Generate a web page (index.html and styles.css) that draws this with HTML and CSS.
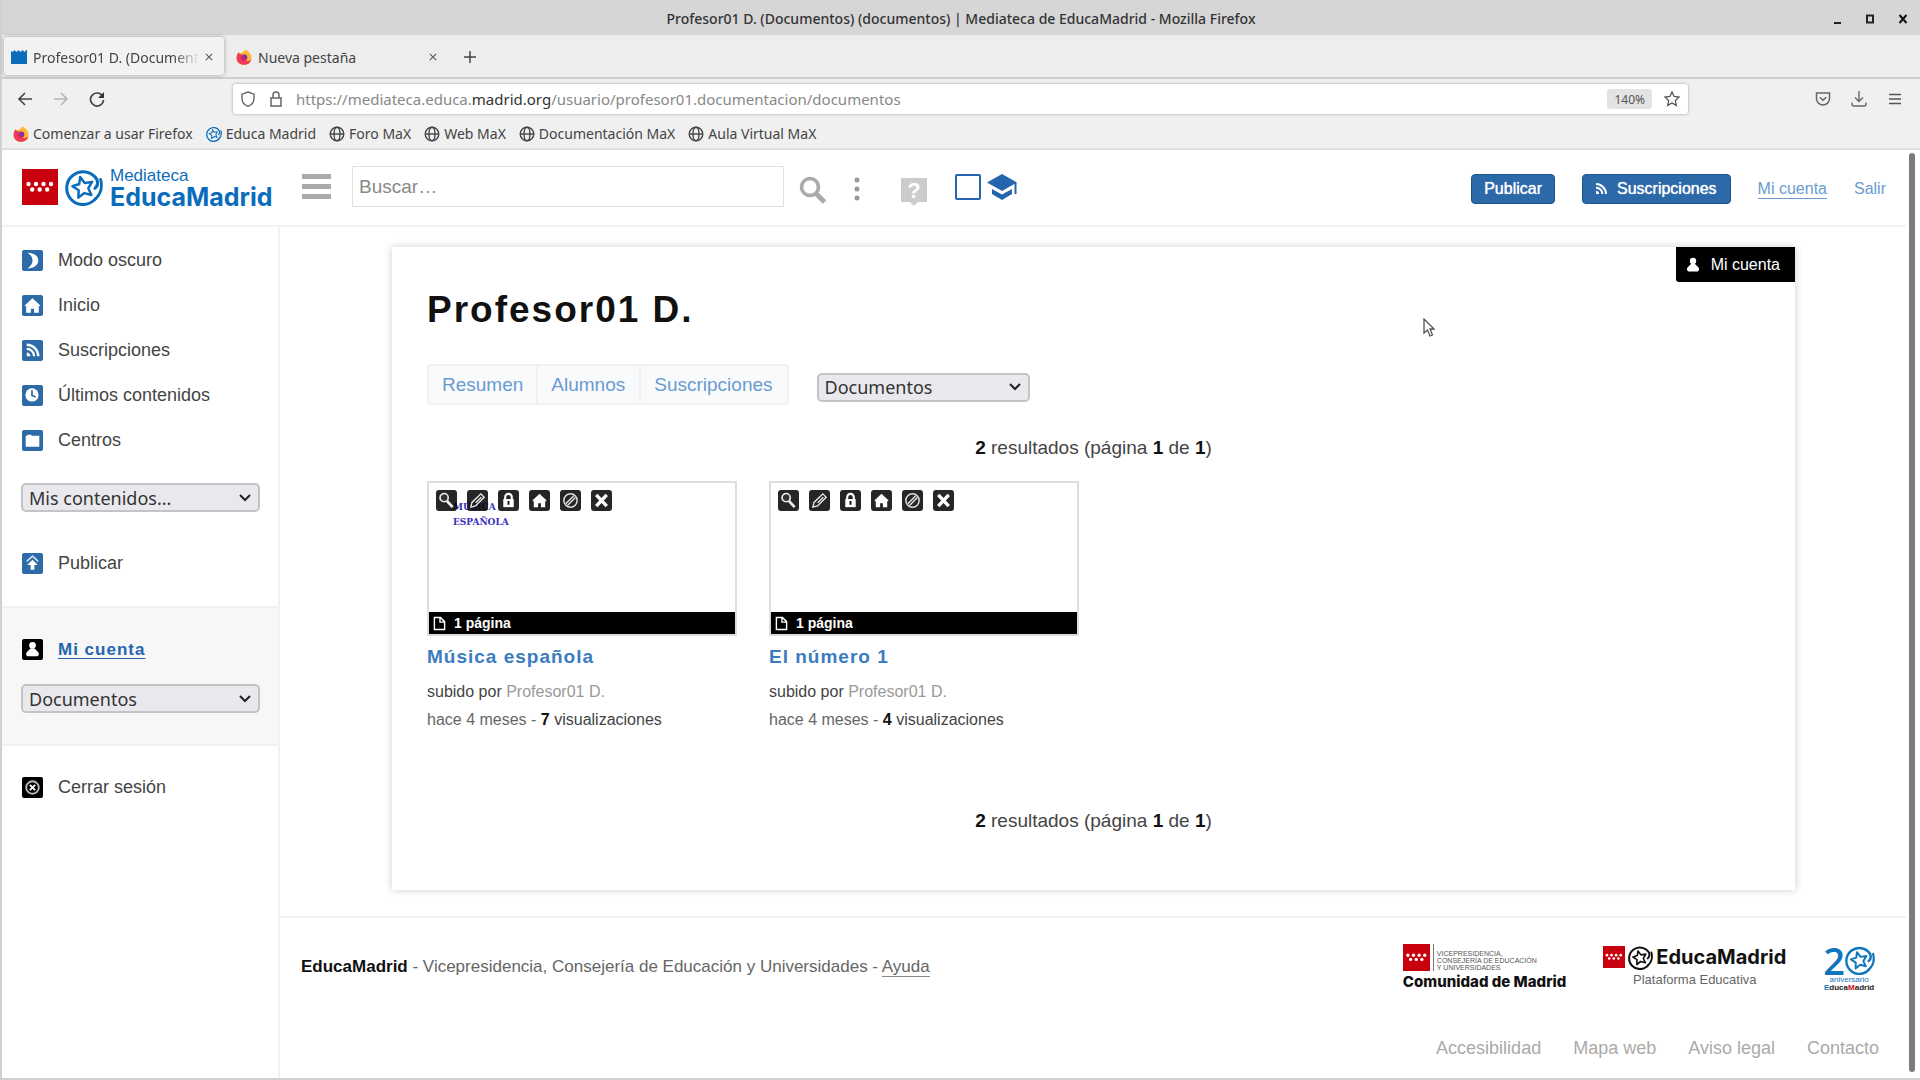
FILE: index.html
```
<!DOCTYPE html>
<html lang="es">
<head>
    <meta charset="UTF-8">
    <meta name="viewport" content="width=device-width, initial-scale=1.0">
    <title>Profesor01 D. (Documentos) (documentos) | Mediateca de EducaMadrid</title>
    <link rel="stylesheet" href="styles.css">
</head>
<body>
    <!-- shared icons -->
    <svg class="sprite" aria-hidden="true">
        <symbol id="globe" viewBox="0 0 16 16">
            <g fill="none" stroke="#444" stroke-width="1.4"><circle cx="8" cy="8" r="6.8"/><ellipse cx="8" cy="8" rx="3" ry="6.8"/><path d="M1.2 8h13.6"/></g>
        </symbol>
        <symbol id="firefox" viewBox="0 0 16 16">
            <path fill="#ffb52e" d="M9 .5c3 1.5 6.5 4 6.5 8.500 0 4-3.500 6.800-7.500 6.800S.6 12.800.6 9c0-2.500 1-4.500 2.400-6l1 1.500C5.500 3.500 7 4 9 .5z"/>
            <path fill="#ef3b58" d="M2.500 3.500C.8 5.500.6 7.500.6 9c0 4 3.300 6.800 7.400 6.800 3.600 0 6.600-2 7.300-5.300C13 12.500 10 12.500 7.500 11 5 9.500 5 7 7 5.500 5 5.500 3.500 5 2.500 3.500z"/>
            <circle cx="8.3" cy="8.6" r="3" fill="#7a2fb5"/>
            <path fill="#d9265c" d="M4.500 7.500c2 .3 3-.7 4.500-.5-1 1-2 1-2 2 .6 1.700 2.500 1.500 4 .8-.8 2-2.500 2.700-4 2.200-1.700-.6-2.700-2.500-2.500-4.500z"/>
        </symbol>
        <symbol id="star" viewBox="0 0 40 40">
            <g fill="none" stroke="currentColor" stroke-linecap="round" stroke-linejoin="round">
                <path d="M32 32.500A17.200 17.200 0 1 1 33.500 12c1.500 4 .5 7.500-2 9.500" stroke-width="3.2"/>
                <path d="M37.500 12C39.500 20 37.500 27.500 32 32.500" stroke-width="3"/>
                <path d="M16 9.500l4.700 6.300 7.800-1.200-4 6.800 3.300 7-7.500-2-6.200 4.800.3-7.700-6.600-4.300 7.200-2.400z" stroke-width="2.6"/>
            </g>
        </symbol>
        <symbol id="flag" viewBox="0 0 36 36">
            <path fill="#c9000e" d="M0 0h36v36H0z"/>
            <g fill="#fff"><circle cx="6.5" cy="15" r="2.2"/><circle cx="14" cy="15" r="2.2"/><circle cx="21.500" cy="15" r="2.2"/><circle cx="29" cy="15" r="2.2"/><circle cx="10.200" cy="20.500" r="2.2"/><circle cx="17.700" cy="20.500" r="2.2"/><circle cx="25.200" cy="20.500" r="2.2"/></g>
        </symbol>
        <symbol id="rss" viewBox="0 0 20 20">
            <g fill="none" stroke="#fff" stroke-width="2.2"><path d="M4.500 4.500c6 0 11 5 11 11M4.500 8.500c4 0 7 3 7 7"/></g><path fill="#fff" d="M4.500 12c2 0 3.500 1.500 3.500 3.500H4.500z"/>
        </symbol>
        <symbol id="house" viewBox="0 0 20 20"><path fill="#fff" d="M10 3l7.500 7-1.500 1v6h-4.500v-4h-3v4H4v-6l-1.500-1z"/></symbol>
        <symbol id="person" viewBox="0 0 20 20"><circle cx="10" cy="6" r="3.2" fill="#fff"/><path fill="#fff" d="M8 9h4l3.500 3.500c1 1.500.5 4-1.500 4H6c-2 0-2.500-2.500-1.500-4z"/></symbol>
        <symbol id="lens" viewBox="0 0 20 20"><circle cx="7.5" cy="7" r="4.3" fill="#333" stroke="#eee" stroke-width="1.7"/><path d="M10.500 10.500l6 6.500" stroke="#eee" stroke-width="2.8"/></symbol>
        <symbol id="pencil" viewBox="0 0 20 20"><path fill="none" stroke="#eee" stroke-width="1.4" d="M3 17l1.200-5L13.500 3l3.500 3.500L8 15.800zM8 12.500l6-6"/></symbol>
        <symbol id="lock" viewBox="0 0 20 20"><path fill="none" stroke="#fff" stroke-width="2.2" d="M6.500 9V6.500a3.500 3.500 0 0 1 7 0V9"/><path fill="#fff" d="M4.500 8.500h11V17h-11z"/><path stroke="#111" stroke-width="2" d="M10 10.500v4"/></symbol>
        <symbol id="ban" viewBox="0 0 20 20"><g fill="none" stroke="#ddd" stroke-width="1.6"><circle cx="10" cy="10" r="7"/><path d="M5 13.500L13.500 5M6.800 15.200L15.200 6.800"/></g></symbol>
        <symbol id="cross" viewBox="0 0 20 20"><path stroke="#fff" stroke-width="3.6" d="M4.500 4l11 12M15.500 4l-11 12"/></symbol>
        <symbol id="page" viewBox="0 0 14 16"><path fill="none" stroke="#fff" stroke-width="1.5" d="M1.500 1.500h6.500l4.500 4.500v8.500h-11zM7.500 1.500v5h5"/></symbol>
    </svg>

    <div class="window">
        <div class="titlebar">
            <span class="window-title">Profesor01 D. (Documentos) (documentos) | Mediateca de EducaMadrid - Mozilla Firefox</span>
            <div class="window-buttons">
                <button aria-label="Minimizar"><svg viewBox="0 0 10 10"><path d="M2 9h7" stroke="#222" stroke-width="2"/></svg></button>
                <button aria-label="Maximizar"><svg viewBox="0 0 10 10"><path d="M2 1.500h6v7H2z" fill="none" stroke="#222" stroke-width="2"/></svg></button>
                <button aria-label="Cerrar"><svg viewBox="0 0 10 10"><path d="M1.500 1l7 8M8.500 1l-7 8" stroke="#111" stroke-width="2"/></svg></button>
            </div>
        </div>

        <div class="tabstrip">
            <div class="tab tab-active">
                <svg class="favicon" viewBox="0 0 16 16"><path fill="#0b6cbc" d="M0 2l2 1 1-2 3 2 1-2 3 2 1-2 3 2 1-2h1v14H0z"/></svg>
                <span class="tab-label tab-fade">Profesor01 D. (Documentos)</span>
                <button class="tab-close" aria-label="Cerrar pestaña"><svg viewBox="0 0 10 10"><path d="M1 1l8 8M9 1l-8 8" stroke="#555" stroke-width="1.3"/></svg></button>
            </div>
            <div class="tab">
                <svg class="favicon"><use href="#firefox"/></svg>
                <span class="tab-label">Nueva pestaña</span>
                <button class="tab-close" aria-label="Cerrar pestaña"><svg viewBox="0 0 10 10"><path d="M1 1l8 8M9 1l-8 8" stroke="#555" stroke-width="1.3"/></svg></button>
            </div>
            <button class="new-tab" aria-label="Nueva pestaña"><svg viewBox="0 0 12 12"><path d="M6 0v12M0 6h12" stroke="#444" stroke-width="1.5"/></svg></button>
        </div>

        <div class="toolbar">
            <div class="nav-buttons">
                <button aria-label="Atrás"><svg viewBox="0 0 16 16"><path d="M15 8H2M8 2L2 8l6 6" fill="none" stroke="#444" stroke-width="1.6"/></svg></button>
                <button aria-label="Adelante" disabled><svg viewBox="0 0 16 16"><path d="M1 8h13M8 2l6 6-6 6" fill="none" stroke="#b5b5b5" stroke-width="1.6"/></svg></button>
                <button aria-label="Recargar"><svg viewBox="0 0 16 16"><path d="M13.500 5A6.500 6.500 0 1 0 14.500 9" fill="none" stroke="#444" stroke-width="1.7"/><path d="M15 1v6H9z" fill="#333"/></svg></button>
            </div>
            <div class="urlbar">
                <svg viewBox="0 0 16 16"><path d="M8 1l6 2.200v4.300C14 11 11.500 14 8 15.300 4.500 14 2 11 2 7.500V3.200z" fill="none" stroke="#666" stroke-width="1.4"/></svg>
                <svg viewBox="0 0 16 16"><path d="M3 7h10v8H3zM5 7V4a3 3 0 0 1 6 0v3" fill="none" stroke="#666" stroke-width="1.5"/></svg>
                <span class="url">https://mediateca.educa.<b>madrid.org</b>/usuario/profesor01.documentacion/documentos</span>
                <button class="zoom-level">140%</button>
                <button class="bookmark-star" aria-label="Añadir a marcadores"><svg viewBox="0 0 16 16"><path d="M8 1l2.100 4.500 4.900.6-3.600 3.400.9 4.900L8 12l-4.300 2.400.9-4.900L1 6.100l4.900-.6z" fill="none" stroke="#555" stroke-width="1.3"/></svg></button>
            </div>
            <div class="toolbar-end">
                <button aria-label="Pocket"><svg viewBox="0 0 16 16"><path d="M1.500 2h13v5.500a6.500 6.500 0 0 1-13 0zM4.800 6.200L8 9.300l3.200-3.100" fill="none" stroke="#666" stroke-width="1.5"/></svg></button>
                <button aria-label="Descargas"><svg viewBox="0 0 16 16"><path d="M8 0v10M4 6.500l4 4 4-4M1 11.500v1.500a2 2 0 0 0 2 2h10a2 2 0 0 0 2-2v-1.500" fill="none" stroke="#666" stroke-width="1.4"/></svg></button>
                <button aria-label="Menú"><svg viewBox="0 0 16 16"><path d="M2 3.500h12M2 8h12M2 12.500h12" stroke="#555" stroke-width="1.4"/></svg></button>
            </div>
        </div>

        <div class="bookmarks">
            <a href="#"><svg><use href="#firefox"/></svg>Comenzar a usar Firefox</a>
            <a href="#"><svg class="blue"><use href="#star"/></svg>Educa Madrid</a>
            <a href="#"><svg><use href="#globe"/></svg>Foro MaX</a>
            <a href="#"><svg><use href="#globe"/></svg>Web MaX</a>
            <a href="#"><svg><use href="#globe"/></svg>Documentación MaX</a>
            <a href="#"><svg><use href="#globe"/></svg>Aula Virtual MaX</a>
        </div>

        <div class="viewport">
            <div class="site">
                <header class="site-header">
                    <a class="logo" href="#">
                        <svg class="logo-flag"><use href="#flag"/></svg>
                        <svg class="logo-star"><use href="#star"/></svg>
                        <span class="logo-text"><span>Mediateca</span><strong>EducaMadrid</strong></span>
                    </a>
                    <button class="menu-toggle" aria-label="Menú"><span></span><span></span><span></span></button>
                    <form class="search">
                        <input type="text" placeholder="Buscar…" aria-label="Buscar">
                        <button type="button" class="search-go" aria-label="Buscar"><svg viewBox="0 0 28 28"><circle cx="11" cy="11" r="8.5" fill="none" stroke="#aaa" stroke-width="3.6"/><path d="M16.500 17l9 9" stroke="#aaa" stroke-width="5"/></svg></button>
                        <button type="button" class="search-more" aria-label="Opciones"><svg viewBox="0 0 6 24"><g fill="#999"><circle cx="3" cy="3" r="2.5"/><circle cx="3" cy="12" r="2.5"/><circle cx="3" cy="21" r="2.5"/></g></svg></button>
                        <button type="button" class="search-help" aria-label="Ayuda"><svg viewBox="0 0 26 28"><path d="M0 0h26v24h-9l-4 4-4-4H0z" fill="#ccc"/><text x="13" y="20" text-anchor="middle">?</text></svg></button>
                    </form>
                    <label class="edu-filter">
                        <input type="checkbox" aria-label="Solo contenido educativo">
                        <svg viewBox="0 0 30 26"><path d="M15 0l15 8.500L15 17 0 8.500z" fill="#2565ae"/><path d="M5 15l10 5.500L25 15v5L15 26 5 20z" fill="#2565ae"/><path d="M28.500 9v11" stroke="#2565ae" stroke-width="2"/></svg>
                    </label>
                    <nav class="user-nav">
                        <button class="btn">Publicar</button>
                        <button class="btn btn-rss"><svg><use href="#rss"/></svg>Suscripciones</button>
                        <a class="current" href="#">Mi cuenta</a>
                        <a href="#">Salir</a>
                    </nav>
                </header>

                <div class="site-body">
                    <aside class="sidebar">
                        <ul class="side-list">
                            <li><a href="#"><svg class="side-icon" viewBox="0 0 20 20"><path fill="#fff" d="M5 2.500c7 0 10.500 3.500 10.500 7.500s-3.500 7.500-10.500 7.500c3.500-2 5-4.500 5-7.500S8.500 4.500 5 2.500z"/></svg>Modo oscuro</a></li>
                            <li><a href="#"><svg class="side-icon"><use href="#house"/></svg>Inicio</a></li>
                            <li><a href="#"><svg class="side-icon"><use href="#rss"/></svg>Suscripciones</a></li>
                            <li><a href="#"><svg class="side-icon" viewBox="0 0 20 20"><circle cx="9.5" cy="9.5" r="6.3" fill="#fff"/><path d="M9.500 5V10l3.500 1.500" fill="none" stroke="#2c6ba8" stroke-width="1.6"/></svg>Últimos contenidos</a></li>
                            <li><a href="#"><svg class="side-icon" viewBox="0 0 20 20"><path fill="#fff" d="M3.500 5.500h1.500v-1h4v1h7.500v10.500h-13z"/></svg>Centros</a></li>
                        </ul>
                        <div class="side-select">
                            <select aria-label="Mis contenidos"><option>Mis contenidos...</option></select>
                        </div>
                        <ul class="side-list side-publish">
                            <li><a href="#"><svg class="side-icon" viewBox="0 0 20 20"><path fill="#fff" d="M10 6.500l5 5h-3.200V16H8.200v-4.500H5z"/><path d="M4.500 8L10 3l5.500 5" fill="none" stroke="#cfe0f2" stroke-width="1.5"/></svg>Publicar</a></li>
                        </ul>
                        <div class="side-account">
                            <a class="current" href="#"><svg class="side-icon dark"><use href="#person"/></svg><span>Mi cuenta</span></a>
                            <div class="side-select">
                                <select aria-label="Mi cuenta"><option>Documentos</option></select>
                            </div>
                        </div>
                        <ul class="side-list side-logout">
                            <li><a href="#"><svg class="side-icon dark" viewBox="0 0 20 20"><circle cx="10" cy="10" r="6" fill="none" stroke="#bbb" stroke-width="1.8"/><path d="M7.500 7.500l5 5M12.500 7.500l-5 5" stroke="#fff" stroke-width="1.8"/></svg>Cerrar sesión</a></li>
                        </ul>
                    </aside>

                    <div class="content">
                        <main class="panel">
                            <a class="account-tag" href="#"><svg><use href="#person"/></svg>Mi cuenta</a>
                            <h1>Profesor01 D.</h1>
                            <div class="filters">
                                <nav class="profile-tabs">
                                    <a href="#">Resumen</a>
                                    <a href="#">Alumnos</a>
                                    <a href="#">Suscripciones</a>
                                </nav>
                                <select aria-label="Tipo de contenido"><option>Documentos</option></select>
                            </div>
                            <p class="results"><b>2</b> resultados (página <b>1</b> de <b>1</b>)</p>
                            <div class="cards">
                                <article class="card">
                                    <div class="thumb">
                                        <div class="cover">MÚSICA<br>ESPAÑOLA</div>
                                        <div class="actions">
                                            <button aria-label="Ver"><svg><use href="#lens"/></svg></button>
                                            <button aria-label="Editar"><svg><use href="#pencil"/></svg></button>
                                            <button aria-label="Privado"><svg><use href="#lock"/></svg></button>
                                            <button aria-label="Portada"><svg><use href="#house"/></svg></button>
                                            <button aria-label="Bloquear"><svg><use href="#ban"/></svg></button>
                                            <button aria-label="Eliminar"><svg><use href="#cross"/></svg></button>
                                        </div>
                                        <div class="pages"><svg><use href="#page"/></svg>1 página</div>
                                    </div>
                                    <h2><a href="#">Música española</a></h2>
                                    <p class="author">subido por <a href="#">Profesor01 D.</a></p>
                                    <p class="meta">hace 4 meses - <span><b>7</b> visualizaciones</span></p>
                                </article>
                                <article class="card">
                                    <div class="thumb">
                                        <div class="actions">
                                            <button aria-label="Ver"><svg><use href="#lens"/></svg></button>
                                            <button aria-label="Editar"><svg><use href="#pencil"/></svg></button>
                                            <button aria-label="Privado"><svg><use href="#lock"/></svg></button>
                                            <button aria-label="Portada"><svg><use href="#house"/></svg></button>
                                            <button aria-label="Bloquear"><svg><use href="#ban"/></svg></button>
                                            <button aria-label="Eliminar"><svg><use href="#cross"/></svg></button>
                                        </div>
                                        <div class="pages"><svg><use href="#page"/></svg>1 página</div>
                                    </div>
                                    <h2><a href="#">El número 1</a></h2>
                                    <p class="author">subido por <a href="#">Profesor01 D.</a></p>
                                    <p class="meta">hace 4 meses - <span><b>4</b> visualizaciones</span></p>
                                </article>
                            </div>
                            <p class="results"><b>2</b> resultados (página <b>1</b> de <b>1</b>)</p>
                        </main>

                        <footer class="site-footer">
                            <div class="footer-top">
                                <p><strong>EducaMadrid</strong> - Vicepresidencia, Consejería de Educación y Universidades - <a href="#">Ayuda</a></p>
                                <div class="footer-logos">
                                    <div class="logo-cm">
                                        <div class="logo-cm-top">
                                            <svg><use href="#flag"/></svg>
                                            <span>VICEPRESIDENCIA,<br>CONSEJERÍA DE EDUCACIÓN<br>Y UNIVERSIDADES</span>
                                        </div>
                                        <strong>Comunidad de Madrid</strong>
                                    </div>
                                    <div class="logo-em">
                                        <div class="logo-em-top">
                                            <svg class="em-flag"><use href="#flag"/></svg>
                                            <svg class="em-star"><use href="#star"/></svg>
                                            <strong>EducaMadrid</strong>
                                        </div>
                                        <span>Plataforma Educativa</span>
                                    </div>
                                    <div class="logo-20">
                                        <div class="logo-20-top"><span>2</span><svg><use href="#star"/></svg></div>
                                        <span class="aniv">aniversario</span>
                                        <strong><i>E</i>duca<em>M</em>adrid</strong>
                                    </div>
                                </div>
                            </div>
                            <nav class="footer-links">
                                <a href="#">Accesibilidad</a>
                                <a href="#">Mapa web</a>
                                <a href="#">Aviso legal</a>
                                <a href="#">Contacto</a>
                            </nav>
                        </footer>
                    </div>
                </div>
            </div>
            <div class="scrollbar"></div>
        </div>
    </div>

    <svg class="pointer" viewBox="0 0 12 20"><path d="M1 1v14l3.500-3 2.500 6 2.500-1-2.500-6h4z" fill="#fff" stroke="#555" stroke-width="1.3"/></svg>
</body>
</html>
```
FILE: styles.css
```
* {
    box-sizing: border-box;
}
body {
    margin: 0;
    font-family: "Liberation Sans", Arial, sans-serif;
    font-size: 18px;
    color: #444;
    background: #fff;
}
button {
    padding: 0;
    border: none;
    background: none;
    font-family: inherit;
}
svg {
    display: block;
    flex: none;
}
h1, h2, p, ul {
    margin: 0;
    padding: 0;
}
a {
    color: inherit;
    text-decoration: none;
}
.sprite {
    position: absolute;
    width: 0;
    height: 0;
}

/* browser window */
.window {
    display: flex;
    flex-direction: column;
    min-height: 100vh;
    border-left: 2px solid #d0d0d0;
    border-bottom: 2px solid #d0d0d0;
}
.titlebar, .tabstrip, .toolbar, .bookmarks {
    font-family: "Noto Sans", sans-serif;
    font-size: 14px;
}
.titlebar {
    display: grid;
    grid-template-columns: 1fr auto 1fr;
    align-items: center;
    height: 35px;
    padding-top: 2px;
    background: #d6d6d6;
    color: #333;
}
.window-title {
    grid-column: 2;
    font-weight: 500;
}
.window-buttons {
    display: flex;
    justify-content: flex-end;
    gap: 23px;
    padding-right: 12px;
}
.window-buttons svg {
    width: 10px;
    height: 10px;
}
.tabstrip {
    display: flex;
    align-items: center;
    height: 44px;
    padding-left: 2px;
    background: #ededed;
    border-bottom: 2px solid #cfcfcf;
}
.tab {
    display: flex;
    align-items: center;
    width: 220px;
    height: 38px;
    padding: 2px 11px 0 7px;
    gap: 6px;
    color: #444;
}
.tab + .tab {
    width: 224px;
    padding-left: 12px;
}
.tab-active {
    background: #f2f2f2;
    border-radius: 3px;
    box-shadow: 0 0 4px rgba(0, 0, 0, 0.35);
}
.favicon {
    width: 16px;
    height: 16px;
}
.tab-label {
    flex: 1;
    overflow: hidden;
    white-space: nowrap;
}
.tab-fade {
    -webkit-mask-image: linear-gradient(to right, #000 85%, transparent);
    mask-image: linear-gradient(to right, #000 85%, transparent);
}
.tab-close svg {
    width: 8px;
    height: 8px;
}
.new-tab {
    margin-left: 16px;
    padding-top: 2px;
}
.new-tab svg {
    width: 12px;
    height: 12px;
}
.toolbar {
    display: flex;
    align-items: center;
    height: 40px;
    background: #f0f0f0;
}
.nav-buttons {
    display: flex;
    gap: 20px;
    width: 231px;
    padding-left: 15px;
}
.nav-buttons svg, .urlbar svg, .toolbar-end svg {
    width: 16px;
    height: 16px;
}
.urlbar {
    display: flex;
    flex: 1;
    align-items: center;
    gap: 12px;
    height: 30px;
    padding: 0 8px 0 7px;
    background: #fff;
    border-radius: 3px;
    box-shadow: 0 0 3px rgba(0, 0, 0, 0.35);
}
.url {
    flex: 1;
    color: #888;
    font-size: 15px;
}
.url b {
    font-weight: 400;
    color: #333;
}
.zoom-level {
    height: 20px;
    padding: 0 7px;
    background: #e3e3e3;
    border-radius: 3px;
    color: #555;
    font-size: 12px;
}
.toolbar-end {
    display: flex;
    justify-content: flex-end;
    gap: 20px;
    width: 232px;
    padding-right: 17px;
}
.bookmarks {
    display: flex;
    align-items: center;
    gap: 13px;
    height: 31px;
    padding: 0 11px;
    background: #f0f0f0;
    border-bottom: 2px solid #dedede;
    color: #444;
}
.bookmarks a {
    display: flex;
    align-items: center;
    gap: 4px;
}
.bookmarks svg {
    width: 16px;
    height: 16px;
}
.blue {
    color: #0b6cbc;
}
.viewport {
    display: flex;
    flex: 1;
}
.site {
    display: flex;
    flex: 1;
    flex-direction: column;
}
.scrollbar {
    width: 6px;
    margin: 3px 5px 6px 3px;
    border-radius: 3px;
    background: #7c7c7c;
}

/* site header */
.site-header {
    display: flex;
    align-items: center;
    height: 77px;
    padding: 0 20px 2px;
    border-bottom: 2px solid #f2f2f2;
}
.logo {
    display: flex;
    align-items: center;
    gap: 7px;
    width: 280px;
    color: #0b6cbc;
}
.logo-flag {
    width: 36px;
    height: 36px;
}
.logo-star {
    width: 38px;
    height: 38px;
}
.logo-text {
    display: flex;
    flex-direction: column;
    font-size: 17px;
    line-height: 20px;
}
.logo-text strong {
    font-family: Inter, sans-serif;
    font-size: 25px;
    line-height: 22px;
}
.menu-toggle {
    display: flex;
    flex-direction: column;
    gap: 5px;
    width: 29px;
    margin-right: 21px;
}
.menu-toggle span {
    height: 5px;
    background: #aaa;
}
.search {
    display: flex;
    align-items: center;
}
.search input {
    width: 432px;
    height: 41px;
    padding: 0 6px;
    border: 1px solid #e2e2e2;
    font: 19px "Liberation Sans", Arial, sans-serif;
}
.search input::placeholder {
    color: #888;
}
.search-go {
    margin: 6px 27px 0 15px;
}
.search-go svg {
    width: 28px;
    height: 28px;
}
.search-more {
    margin-top: 4px;
}
.search-more svg {
    width: 6px;
    height: 24px;
}
.search-help {
    margin: 10px 28px 0 41px;
}
.search-help svg {
    width: 26px;
    height: 28px;
}
.search-help text {
    fill: #fff;
    font-size: 22px;
    font-weight: 700;
}
.edu-filter {
    display: flex;
    align-items: center;
    gap: 6px;
}
.edu-filter input {
    appearance: none;
    width: 26px;
    height: 26px;
    margin: 0;
    border: 2px solid #2565ae;
    border-radius: 2px;
}
.edu-filter svg {
    width: 30px;
    height: 26px;
}
.user-nav {
    display: flex;
    align-items: center;
    gap: 27px;
    margin-left: auto;
    padding-top: 4px;
    font-size: 16px;
    line-height: 18px;
    color: #6a9bd0;
}
.btn {
    display: flex;
    align-items: center;
    height: 30px;
    padding: 0 12px;
    border: 1px solid #1d568f;
    border-radius: 4px;
    background: #2b69a9;
    color: #fff;
    font-size: 16px;
    text-shadow: 0 0 1px #fff;
}
.btn-rss {
    gap: 7px;
    padding: 0 13px 0 9px;
}
.btn-rss svg {
    width: 18px;
    height: 18px;
}
.user-nav .current {
    padding-top: 1px;
    border-bottom: 1px solid #6a9bd0;
}

/* sidebar */
.site-body {
    display: flex;
    flex: 1;
}
.sidebar {
    width: 278px;
    padding-top: 11px;
    border-right: 2px solid #f2f2f2;
}
.side-list {
    list-style: none;
}
.side-list a, .side-account > a {
    display: flex;
    align-items: center;
    gap: 15px;
    height: 45px;
    padding-left: 20px;
}
.side-icon {
    width: 21px;
    height: 21px;
    border-radius: 2px;
    background: #2c6ba8;
}
.side-icon.dark {
    background: #000;
}
select {
    appearance: none;
    width: 100%;
    height: 29px;
    padding: 0 6px;
    border: 2px solid #c4c4c8;
    border-radius: 5px;
    background: #e9e9ed url("data:image/svg+xml,%3Csvg xmlns='http://www.w3.org/2000/svg' viewBox='0 0 12 8'%3E%3Cpath d='M1 1l5 5 5-5' fill='none' stroke='%23222' stroke-width='2'/%3E%3C/svg%3E") no-repeat right 7px center / 12px 8px;
    color: #333;
    font: 18px "Noto Sans", sans-serif;
    line-height: 24px;
}
.side-select {
    padding: 20px 18px 0 19px;
}
.side-publish {
    padding: 29px 0 20px;
}
.side-account {
    height: 140px;
    padding-top: 19px;
    background: #f7f7f8;
    border-top: 2px solid #f0f0f0;
    border-bottom: 2px solid #f0f0f0;
}
.side-account .side-select {
    padding-top: 12px;
}
.side-account > a {
    color: #2565ae;
    font-size: 17px;
    font-weight: 700;
    letter-spacing: 1px;
}
.side-account span {
    text-decoration: underline;
    text-underline-offset: 3px;
}
.side-logout {
    padding-top: 19px;
}

/* content */
.content {
    display: flex;
    flex: 1;
    flex-direction: column;
}
.panel {
    position: relative;
    flex: 1;
    margin: 20px 111px 26px 112px;
    padding: 0 35px;
    box-shadow: 0 0 8px rgba(0, 0, 0, 0.2);
}
.account-tag {
    position: absolute;
    top: 0;
    right: 0;
    display: flex;
    align-items: center;
    gap: 8px;
    height: 35px;
    padding: 0 15px 0 7px;
    border-radius: 0 0 0 3px;
    background: #000;
    color: #fff;
    font-size: 16px;
}
.account-tag svg {
    width: 20px;
    height: 20px;
}
h1 {
    padding-top: 42px;
    color: #111;
    font-size: 37px;
    line-height: 42px;
    letter-spacing: 2px;
}
.filters {
    display: flex;
    align-items: center;
    gap: 28px;
    margin-top: 33px;
}
.filters select {
    width: 213px;
    margin-top: 5px;
}
.profile-tabs {
    display: flex;
    border: 2px solid #f1f1f2;
    border-radius: 4px;
    background: #f9fafb;
    color: #6a9bd0;
    font-size: 19px;
    line-height: 37px;
}
.profile-tabs a {
    padding: 0 13px;
}
.profile-tabs a + a {
    padding-right: 14px;
    border-left: 2px solid #f1f1f2;
}
.results {
    margin: 32px 0 22px;
    font-size: 19px;
    line-height: 22px;
    text-align: center;
}
.results b, .meta b {
    color: #111;
}
.cards {
    display: flex;
    gap: 32px;
    margin-bottom: 76px;
}
.card {
    width: 310px;
}
.thumb {
    position: relative;
    display: flex;
    flex-direction: column;
    justify-content: space-between;
    height: 155px;
    border: 2px solid #dedede;
}
.cover {
    position: absolute;
    top: 16px;
    left: 24px;
    color: #3a2fc0;
    font: 700 10px/15px "DejaVu Serif Condensed", "DejaVu Serif", serif;
}
.actions {
    position: relative;
    display: flex;
    gap: 10px;
    padding: 7px;
}
.actions button {
    width: 21px;
    height: 21px;
    padding: 1px;
    border-radius: 3px;
    background: rgba(0, 0, 0, 0.85);
}
.actions svg {
    width: 19px;
    height: 19px;
}
.pages {
    display: flex;
    align-items: center;
    gap: 8px;
    height: 22px;
    padding-left: 4px;
    background: #000;
    color: #fff;
    font-size: 14px;
    font-weight: 700;
}
.pages svg {
    width: 13px;
    height: 15px;
}
.card h2 {
    margin: 9px 0;
    color: #3a7cc2;
    font-size: 19px;
    line-height: 24px;
    letter-spacing: 1px;
}
.card p {
    font-size: 16px;
    line-height: 28px;
}
.author a {
    color: #999;
}
.meta {
    color: #666;
}
.meta span {
    color: #444;
}

/* footer */
.site-footer {
    height: 162px;
    border-top: 2px solid #f2f2f2;
    padding: 26px 27px 0 21px;
}
.footer-top {
    display: flex;
    justify-content: space-between;
}
.footer-top p {
    padding-top: 13px;
    font-size: 17px;
    line-height: 20px;
    color: #666;
}
.footer-top p strong {
    color: #111;
}
.footer-top p a {
    border-bottom: 1px solid #888;
}
.footer-logos {
    display: flex;
    align-items: flex-start;
    gap: 37px;
    height: 91px;
    padding-right: 4px;
    color: #111;
}
.logo-cm-top {
    display: flex;
    gap: 3px;
}
.logo-cm-top svg {
    width: 27px;
    height: 27px;
}
.logo-cm-top span {
    padding: 6px 0 0 3px;
    border-left: 1px solid #777;
    color: #555;
    font-size: 7px;
    line-height: 7px;
}
.logo-cm strong {
    display: block;
    padding-top: 2px;
    font: 800 15px/18px Inter, sans-serif;
}
.logo-em {
    display: flex;
    flex-direction: column;
    align-items: center;
    gap: 2px;
    font-size: 13px;
    color: #666;
}
.logo-em-top {
    display: flex;
    align-items: center;
    gap: 3px;
    color: #111;
}
.em-flag {
    width: 22px;
    height: 22px;
}
.em-star {
    width: 25px;
    height: 25px;
}
.logo-em strong {
    font: 700 20px/26px Inter, sans-serif;
}
.logo-20 {
    color: #0f75bd;
    text-align: center;
}
.logo-20-top {
    display: flex;
    align-items: center;
    height: 32px;
    font: 600 38px/32px "Open Sans", sans-serif;
}
.logo-20-top svg {
    width: 30px;
    height: 30px;
}
.aniv, .logo-20 strong {
    display: block;
    font-size: 8px;
    line-height: 8px;
}
.logo-20 strong {
    color: #222;
}
.logo-20 i {
    color: #0f75bd;
    font-style: normal;
}
.logo-20 em {
    color: #d0021b;
    font-style: normal;
}
.footer-links {
    display: flex;
    justify-content: flex-end;
    gap: 32px;
    color: #aaa;
    line-height: 26px;
}
.pointer {
    position: absolute;
    top: 318px;
    left: 1423px;
    width: 12px;
    height: 20px;
}
```
